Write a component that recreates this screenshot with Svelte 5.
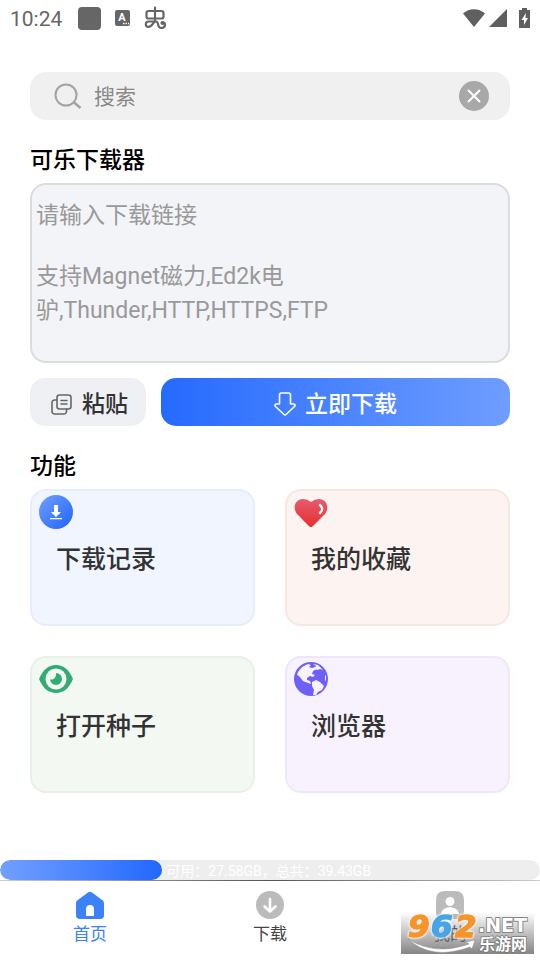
<script>
  const placeholder = '请输入下载链接\n\n支持Magnet磁力,Ed2k电驴,Thunder,HTTP,HTTPS,FTP';

  const free = 27.58;
  const total = 39.43;

  const features = [
    { id: 'history', label: '下载记录' },
    { id: 'favorite', label: '我的收藏' },
    { id: 'torrent', label: '打开种子' },
    { id: 'browser', label: '浏览器' }
  ];

  const tabs = [
    { id: 'home', label: '首页' },
    { id: 'download', label: '下载' },
    { id: 'mine', label: '我的' }
  ];

  let keyword = $state('');
  let link = $state('');
  let activeTab = $state('home');

  let usedPercent = $derived(((total - free) / total) * 100);

  async function paste() {
    link = await navigator.clipboard.readText();
  }
</script>

<div class="app">
  <header class="status-bar">
    <span class="time">10:24</span>
    <span class="square"></span>
    <svg class="letter" width="15" height="16" viewBox="0 0 15 16">
      <rect width="15" height="16" rx="2" fill="#666" />
      <text x="7" y="11" text-anchor="middle" font-size="11" font-weight="700" fill="#fff">A</text>
      <path d="M8 13.5h1.5M10.5 13.5h1.5M13 13.5h1" stroke="#fff" stroke-width="1.4" />
    </svg>
    <svg width="23" height="24" viewBox="0 0 23 24" fill="none" stroke="#666" stroke-width="2.2" stroke-linecap="round" stroke-linejoin="round">
      <rect x="2.5" y="5" width="17" height="7.5" rx="2" />
      <path d="M11 1.5v14M9.5 15.500H4.500a2.700 2.700 0 0 0 0 5.400c4.500 0 4-5.400 7.500-5.400 3.500 0 .500 6.500 5 6.500 4.500 0 5-4.500 2.500-5.500" />
      <circle cx="18.500" cy="17" r="1" />
    </svg>
    <span class="spacer"></span>
    <div class="signals">
      <svg width="22" height="18" viewBox="0 0 22 18" fill="#5f5f5f"><path d="M11 18 0 4.500C6-1.300 16-1.300 22 4.500z" /></svg>
      <svg width="18" height="18" viewBox="0 0 18 18" fill="#5f5f5f"><path d="M18 0v18H0z" /></svg>
    </div>
    <svg width="11" height="20" viewBox="0 0 11 20">
      <path d="M3 0h5v2h3v18H0V2h3z" fill="#5f5f5f" />
      <path d="M7 5 2.500 12H5v5l4-7H6.500z" fill="#fff" />
    </svg>
  </header>

  <main>
    <div class="search">
      <svg width="28" height="28" viewBox="0 0 28 28" fill="none" stroke="#a3a3a3" stroke-width="2">
        <circle cx="12" cy="13" r="10.500" />
        <path d="m19.500 20 7 6" stroke-width="2.500" />
      </svg>
      <input type="text" placeholder="搜索" aria-label="搜索" bind:value={keyword} />
      <button type="button" class="clear" aria-label="清除" onclick={() => (keyword = '')}>
        <svg width="30" height="30" viewBox="0 0 30 30">
          <circle cx="15" cy="15" r="15" fill="#a8a8a8" />
          <path d="m9.500 9.500 11 11m0-11-11 11" stroke="#fff" stroke-width="2" stroke-linecap="round" />
        </svg>
      </button>
    </div>

    <h2><label for="link">可乐下载器</label></h2>
    <textarea id="link" {placeholder} bind:value={link}></textarea>

    <div class="actions">
      <button type="button" class="paste" onclick={paste}>
        <svg width="22" height="22" viewBox="0 0 22 22" fill="none" stroke="#666" stroke-width="1.600" stroke-linecap="round">
          <rect x="6" y="2" width="14" height="14" rx="2.500" />
          <path d="M6 7H3.500A2.500 2.500 0 0 0 1 9.500v9A2.500 2.500 0 0 0 3.500 21H13a2.500 2.500 0 0 0 2.500-2.500V16M10 7.500h6M10 11h6" />
        </svg>
        粘贴
      </button>
      <button type="button" class="download">
        <svg width="22" height="24" viewBox="0 0 22 24" fill="none" stroke="#fff" stroke-width="1.600" stroke-linejoin="round">
          <path d="M7.500 1h7a2 2 0 0 1 2 2v9h3c1.500 0 2 1.500 1 2.500L12 22.500q-1 1-2 0L1.500 14.500c-1-1-.500-2.500 1-2.500h3V3a2 2 0 0 1 2-2z" />
        </svg>
        立即下载
      </button>
    </div>

    <h2>功能</h2>
    <div class="grid">
      {#each features as item}
        <button type="button" class="tile {item.id}">
          <svg width="34" height="34" viewBox="0 0 34 34">
            {#if item.id === 'history'}
              <defs>
                <linearGradient id="blue" x1="0" x2="1" y1="0" y2="1">
                  <stop offset="0" stop-color="#72a0ff" />
                  <stop offset="1" stop-color="#1f62fb" />
                </linearGradient>
              </defs>
              <circle cx="17" cy="17" r="17" fill="url(#blue)" />
              <path d="M15 10h4v7h3l-5 5-5-5h3zM11 23h12v1.200H11z" fill="#fff" />
            {:else if item.id === 'favorite'}
              <defs>
                <linearGradient id="red" x1="0" x2="0" y1="0" y2="1">
                  <stop offset="0" stop-color="#e75c70" />
                  <stop offset="1" stop-color="#e92d2c" />
                </linearGradient>
              </defs>
              <path d="M17 32c-1.500 0-3-2-13.500-12.500C-2 13.500 1 4 9 4q4.500 0 8 3 3.500-3 8-3c8 0 11 9.500 5.500 15.500C20 30 18.500 32 17 32z" fill="url(#red)" />
              <path d="M26 10q4.500 4 0 8" fill="none" stroke="#fff" stroke-width="2.400" stroke-linecap="round" />
            {:else if item.id === 'torrent'}
              <path d="M0 17C4 8 9 3 17 3s13 5 17 14c-4 9-9 14-17 14S4 26 0 17z" fill="#32ac74" />
              <circle cx="17" cy="17" r="10.500" fill="#f3f8f3" />
              <path d="M17 11a6 6 0 1 1-6 6q1.500 1 3.500 0 3-2 2.500-6z" fill="#32ac74" />
            {:else}
              <circle cx="17" cy="17" r="17" fill="#6d60fa" />
              <path d="M4 10l4-5 6-3 3 1-2 2 3 1 3-1 2 2-4 2-1 3 3 1-2 2-3-1-3 2v2l3 1 1 3-3-1-5-2-4-5-2-1zM19 2l5 1 5 5-3-1-3 1-2-2 1-2zM18 20l4-2 4 2 4 4-2 4-4 2-2 3h-3l1-5-2-4zM31 13l1 1v5l-1-1z" fill="#f7f2fe" />
            {/if}
          </svg>
          <span>{item.label}</span>
        </button>
      {/each}
    </div>
  </main>

  <div class="storage" role="progressbar" aria-label="存储空间" aria-valuenow={Math.round(usedPercent)}>
    <div class="used" style="width: {usedPercent}%"></div>
    <span>可用：{free}GB，总共：{total}GB</span>
  </div>

  <nav>
    {#each tabs as tab}
      <button type="button" class:active={activeTab === tab.id} onclick={() => (activeTab = tab.id)}>
        <svg width="28" height="28" viewBox="0 0 28 28" fill="currentColor">
          {#if tab.id === 'home'}
            <path d="M12 1.500q2-1.300 4 0l10.500 7.800q1.500 1.200 1.500 3V24a4 4 0 0 1-4 4H4a4 4 0 0 1-4-4V12.300q0-1.800 1.500-3z" />
            <path d="M10 25v-7a4 4 0 0 1 8 0v7z" fill="#fff" />
          {:else if tab.id === 'download'}
            <circle cx="14" cy="14" r="14" />
            <path d="M14 8v12M8.500 15.500l5.500 5 5.500-5" fill="none" stroke="#fff" stroke-width="2.600" stroke-linecap="round" stroke-linejoin="round" />
          {:else}
            <path d="M9 0h10q9 0 9 9v12q0 7-7 7H7q-7 0-7-7V9q0-9 9-9z" />
            <circle cx="14" cy="10.500" r="4.500" fill="#fff" />
            <path d="M5 23c1-9 17-9 18 0z" fill="#fff" />
          {/if}
        </svg>
        <span>{tab.label}</span>
      </button>
    {/each}
  </nav>

  <div class="watermark">
    <svg width="133" height="42" viewBox="0 0 133 42">
      <g font-family="DejaVu Sans" font-weight="700" stroke-linejoin="round">
        <g class="digits" font-size="31" font-style="italic" stroke-width="1.500">
          <text x="7" y="25" fill="#f7942b" stroke="#f7942b">9</text>
          <text x="30" y="25" fill="#46a5e8" stroke="#46a5e8">6</text>
          <text x="54" y="25" fill="#f7942b" stroke="#f7942b">2</text>
        </g>
        <text x="77" y="20" font-size="19" fill="#fff" stroke="#888" stroke-width="2" paint-order="stroke">.NET</text>
      </g>
      <path d="M7 27q27 17 61 5l-3-2 9-2-3 9-2-2Q31 49 7 27z" fill="#fff" stroke="#888" stroke-width=".5" />
      <text class="site" x="78" y="38" font-size="16" font-weight="700" fill="#fff" stroke="#777" stroke-width="1.500" paint-order="stroke">乐游网</text>
    </svg>
  </div>
</div>

<style>
  :global(body) {
    background: #fff;
  }

  .app {
    position: relative;
    display: flex;
    flex-direction: column;
    min-height: 100vh;
    font-family: Roboto, "Noto Sans CJK SC", sans-serif;
    color: #333;
  }

  svg {
    display: block;
    flex: none;
  }

  button {
    padding: 0;
    border: none;
    background: none;
    font-family: inherit;
    color: inherit;
    cursor: pointer;
  }

  .status-bar {
    display: flex;
    align-items: center;
    height: 36px;
    padding: 0 10px;
    color: #666;
  }

  .time {
    margin-right: 16px;
    padding-top: 2px;
    font-size: 21px;
  }

  .square {
    width: 23px;
    height: 23px;
    border-radius: 4px;
    background: #666;
  }

  .letter {
    margin: 0 14px;
  }

  .spacer {
    flex: 1;
  }

  .signals {
    display: flex;
    gap: 4px;
    margin-right: 12px;
  }

  main {
    flex: 1;
    padding: 36px 30px 30px;
  }

  .search {
    display: flex;
    align-items: center;
    gap: 12px;
    height: 48px;
    padding: 0 21px 0 24px;
    border-radius: 16px;
    background: #f0f0f0;
    box-sizing: border-box;
  }

  .search input {
    flex: 1;
    min-width: 0;
    padding: 2px 0 0;
    border: none;
    outline: none;
    background: none;
    font-family: inherit;
    font-size: 21px;
    color: #333;
  }

  .search input::placeholder {
    color: #888;
  }

  h2 {
    margin: 24px 0 5px;
    font-size: 23px;
    font-weight: 500;
    line-height: 34px;
    color: #000;
  }

  textarea {
    display: block;
    width: 100%;
    height: 180px;
    padding: 11px 4px;
    border: 2px solid #dadcdf;
    border-radius: 16px;
    outline: none;
    resize: none;
    background: #f3f4f7;
    box-sizing: border-box;
    font-family: inherit;
    font-size: 23px;
    color: #333;
  }

  textarea::placeholder {
    color: #999;
  }

  .actions {
    display: flex;
    gap: 15px;
    margin-top: 15px;
  }

  .actions button {
    display: flex;
    align-items: center;
    justify-content: center;
    gap: 9px;
    height: 48px;
    border-radius: 15px;
    font-size: 23px;
    font-weight: 500;
  }

  .actions svg {
    margin-top: 4px;
  }

  .paste {
    padding: 0 18px 0 21px;
    background: #eff0f4;
  }

  .download {
    flex: 1;
    background: linear-gradient(90deg, #256aff, #6f9dff);
  }

  .actions .download {
    color: #fff;
  }

  .grid {
    display: grid;
    grid-template-columns: 1fr 1fr;
    gap: 30px;
  }

  .tile {
    display: flex;
    flex-direction: column;
    align-items: flex-start;
    gap: 13px;
    min-height: 137px;
    padding: 4px 7px;
    border: 2px solid;
    border-radius: 16px;
    font-size: 25px;
    font-weight: 500;
    line-height: 36px;
  }

  .tile span {
    padding-left: 17px;
  }

  .history {
    background: #f0f5ff;
    border-color: #e6edfc;
  }

  .favorite {
    background: #fdf3f1;
    border-color: #f7e7e3;
  }

  .torrent {
    background: #f3f8f3;
    border-color: #e7f1e7;
  }

  .browser {
    background: #f7f2fe;
    border-color: #eee7fc;
  }

  .storage {
    display: flex;
    align-items: center;
    gap: 4px;
    height: 20px;
    border-radius: 10px;
    overflow: hidden;
    background: #eee;
    font-size: 14px;
    color: #fff;
    white-space: nowrap;
  }

  .used {
    height: 100%;
    border-radius: 10px;
    background: linear-gradient(90deg, #72a0ff, #2268ff);
  }

  nav {
    display: flex;
    padding: 10px 0 13px;
    border-top: 1px solid;
    border-image: linear-gradient(90deg, #ccc, #555, #ccc) 1;
  }

  nav button {
    flex: 1;
    display: flex;
    flex-direction: column;
    align-items: center;
    gap: 3px;
    font-size: 17px;
    line-height: 25px;
    color: #444;
  }

  nav button svg {
    color: #bbb;
  }

  nav .active,
  nav .active svg {
    color: #3b82f9;
  }

  .watermark {
    position: absolute;
    right: 6px;
    bottom: 6px;
    background: linear-gradient(rgba(120, 120, 120, 0), rgba(120, 120, 120, 0.9));
    pointer-events: none;
  }

  .watermark svg {
    overflow: visible;
  }

  .digits {
    filter: drop-shadow(0 0 1px #fff) drop-shadow(0 0 1px #fff);
  }

  .site {
    font-family: "Noto Sans CJK SC", sans-serif;
  }
</style>
